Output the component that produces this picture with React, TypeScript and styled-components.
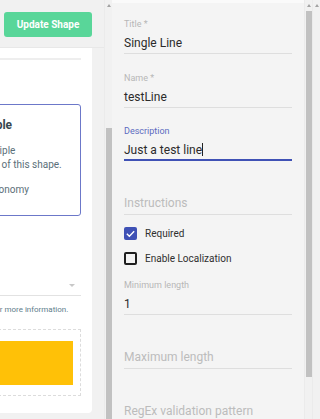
import styled, { createGlobalStyle } from 'styled-components'

const Global = createGlobalStyle`
  html, body { margin: 0; padding: 0; overflow: hidden; }
  body { font-family: Roboto, "Liberation Sans", sans-serif; }
`

function App() {
  return (
    <>
      <Global />
      <Page>
        <LeftPanel>
          <Header>
            <UpdateButton>Update Shape</UpdateButton>
          </Header>
          <CardArea>
            <Card>
              <CardInner>
                <Divider />
                <InfoBox>
                  <InfoTitle>Example</InfoTitle>
                  <InfoLine>Its multiple</InfoLine>
                  <InfoLine>regions of this shape.</InfoLine>
                  <InfoLine $gap={11}>See taxonomy</InfoLine>
                </InfoBox>
                <SelectRow>
                  <SelectValue>Text</SelectValue>
                  <SelectArrow />
                </SelectRow>
                <Helper>Read docs for more information.</Helper>
                <DropZone>
                  <Swatch />
                </DropZone>
              </CardInner>
            </Card>
          </CardArea>
        </LeftPanel>
        <ScrollBar>
          <Arrow />
          <Thumb $top={117} $bottom={0} />
        </ScrollBar>
        <RightPanel>
          <Field $top={15} label="Title *" value="Single Line" />
          <Field label="Name *" value="testLine" />
          <Field $top={17} label="Description" value="Just a test line" focused />
          <Field placeholder="Instructions" />
          <Checks>
            <CheckRow>
              <Box $checked>
                <svg width="11" height="11" viewBox="0 0 24 24">
                  <polyline points="4,12.5 9.5,18 20,7" fill="none" stroke="#fff" strokeWidth="3" />
                </svg>
              </Box>
              Required
            </CheckRow>
            <CheckRow>
              <Box />
              Enable Localization
            </CheckRow>
          </Checks>
          <Field $top={8} label="Minimum length" value="1" />
          <Field placeholder="Maximum length" />
          <Field placeholder="RegEx validation pattern" />
        </RightPanel>
        <ScrollBar>
          <Arrow />
          <Thumb $top={0} $bottom={42} />
        </ScrollBar>
        <ScrollBar>
          <Arrow />
        </ScrollBar>
      </Page>
    </>
  )
}

type FieldProps = {
  label?: string
  value?: string
  placeholder?: string
  focused?: boolean
  $top?: number
}

function Field({ label, value, placeholder, focused, $top }: FieldProps) {
  return (
    <FieldWrap $top={$top}>
      <Label $focused={focused}>{label}</Label>
      <Input $focused={focused}>
        {value ? <Value>{value}</Value> : <Placeholder>{placeholder}</Placeholder>}
        {focused && <Caret />}
      </Input>
    </FieldWrap>
  )
}

const Page = styled.div`
  display: flex;
  width: 320px;
  height: 419px;
  overflow: hidden;
  background: #f3f3f3;
`
const LeftPanel = styled.div`
  width: 104px;
  flex-shrink: 0;
  display: flex;
  flex-direction: column;
  background: #f1f1f1;
`
const Header = styled.div`
  height: 48px;
  flex-shrink: 0;
  display: flex;
  justify-content: flex-end;
  align-items: flex-start;
  padding: 12px 12px 0 0;
  box-sizing: border-box;
  border-bottom: 1px solid #e8e8e8;
`
const UpdateButton = styled.button`
  width: 88px;
  height: 25px;
  border: none;
  border-radius: 3px;
  background: #59d699;
  color: #fff;
  font-family: Roboto, sans-serif;
  font-size: 10px;
  font-weight: 700;
  padding: 0;
`
const CardArea = styled.div`
  padding-right: 12px;
  display: flex;
`
const Card = styled.div`
  width: 92px;
  height: 365px;
  background: #fff;
  border-bottom-right-radius: 4px;
  overflow: hidden;
  display: flex;
  justify-content: flex-end;
  padding-right: 11px;
  box-sizing: border-box;
`
const CardInner = styled.div`
  width: 128px;
  flex-shrink: 0;
  display: flex;
  flex-direction: column;
`
const Divider = styled.div`
  height: 2px;
  margin-top: 10px;
  background: #eeeeee;
`
const InfoBox = styled.div`
  margin-top: 44px;
  height: 112px;
  box-sizing: border-box;
  border: 1px solid #6c78c9;
  border-radius: 3px;
  padding: 13px 12px 0;
  white-space: nowrap;
`
const InfoTitle = styled.div`
  font-size: 12px;
  line-height: 14px;
  font-weight: 700;
  color: #37474f;
  margin-bottom: 12px;
`
const InfoLine = styled.div<{ $gap?: number }>`
  font-size: 10px;
  line-height: 14px;
  color: #5b6f79;
  margin-top: ${p => p.$gap ?? 0}px;
`
const SelectRow = styled.div`
  margin-top: 59px;
  height: 20px;
  display: flex;
  align-items: center;
  justify-content: space-between;
  border-bottom: 1px solid #e2e2e2;
  padding-right: 6px;
`
const SelectValue = styled.span`
  font-size: 11px;
  color: #333;
`
const SelectArrow = styled.span`
  width: 0;
  height: 0;
  border-left: 3px solid transparent;
  border-right: 3px solid transparent;
  border-top: 3px solid #c8c8c8;
`
const Helper = styled.div`
  margin-top: 8px;
  font-size: 8px;
  line-height: 12px;
  color: #607d8b;
  white-space: nowrap;
`
const DropZone = styled.div`
  margin-top: 13px;
  height: 67px;
  box-sizing: border-box;
  border: 1px dashed #dcdcdc;
  padding: 11px 7px 10px;
  display: flex;
`
const Swatch = styled.div`
  flex: 1;
  background: #ffc107;
`
const ScrollBar = styled.div`
  width: 8px;
  flex-shrink: 0;
  display: flex;
  flex-direction: column;
  align-items: center;
  background: #f1f1f1;
  border-left: 1px solid #ebebeb;
  box-sizing: border-box;
`
const Arrow = styled.div`
  margin-top: 4px;
  height: 0;
  width: 0;
  border-left: 2.5px solid transparent;
  border-right: 2.5px solid transparent;
  border-bottom: 3px solid #a3a3a3;
  margin-bottom: 4px;
`
const Thumb = styled.div<{ $top: number; $bottom: number }>`
  width: 6px;
  flex: 1;
  margin-top: ${p => p.$top}px;
  margin-bottom: ${p => p.$bottom}px;
  background: #c1c1c1;
`
const RightPanel = styled.div`
  width: 192px;
  flex-shrink: 0;
  display: flex;
  flex-direction: column;
  padding: 0 12px;
  box-sizing: border-box;
  background: #f4f4f4;
  border-top: 3px solid #fafafa;
`
const FieldWrap = styled.div<{ $top?: number }>`
  margin-top: ${p => p.$top ?? 18}px;
  height: 36px;
  flex-shrink: 0;
  display: flex;
  flex-direction: column;
`
const Label = styled.div<{ $focused?: boolean }>`
  height: 12px;
  font-size: 9px;
  line-height: 12px;
  color: ${p => (p.$focused ? '#5c6bc0' : '#b7b7b7')};
`
const Input = styled.div<{ $focused?: boolean }>`
  margin-top: 3px;
  height: 20px;
  display: flex;
  align-items: center;
  border-bottom: ${p => (p.$focused ? '2px solid #3f51b5' : '1px solid #dedede')};
  padding-bottom: ${p => (p.$focused ? 0 : 1)}px;
`
const Value = styled.span`
  font-size: 12px;
  line-height: 16px;
  color: #2b2b2b;
`
const Placeholder = styled.span`
  font-size: 12px;
  line-height: 16px;
  color: #bcbcbc;
`
const Caret = styled.span`
  width: 1px;
  height: 13px;
  background: #222;
`
const Checks = styled.div`
  margin-top: 6px;
  display: flex;
  flex-direction: column;
`
const CheckRow = styled.div`
  height: 25px;
  display: flex;
  align-items: center;
  gap: 8px;
  font-size: 10px;
  color: #2f2f2f;
`
const Box = styled.span<{ $checked?: boolean }>`
  width: 13px;
  height: 13px;
  box-sizing: border-box;
  border-radius: 2px;
  display: flex;
  align-items: center;
  justify-content: center;
  background: ${p => (p.$checked ? '#3f51b5' : 'transparent')};
  border: ${p => (p.$checked ? 'none' : '2px solid #1f1f1f')};
`

export default App
